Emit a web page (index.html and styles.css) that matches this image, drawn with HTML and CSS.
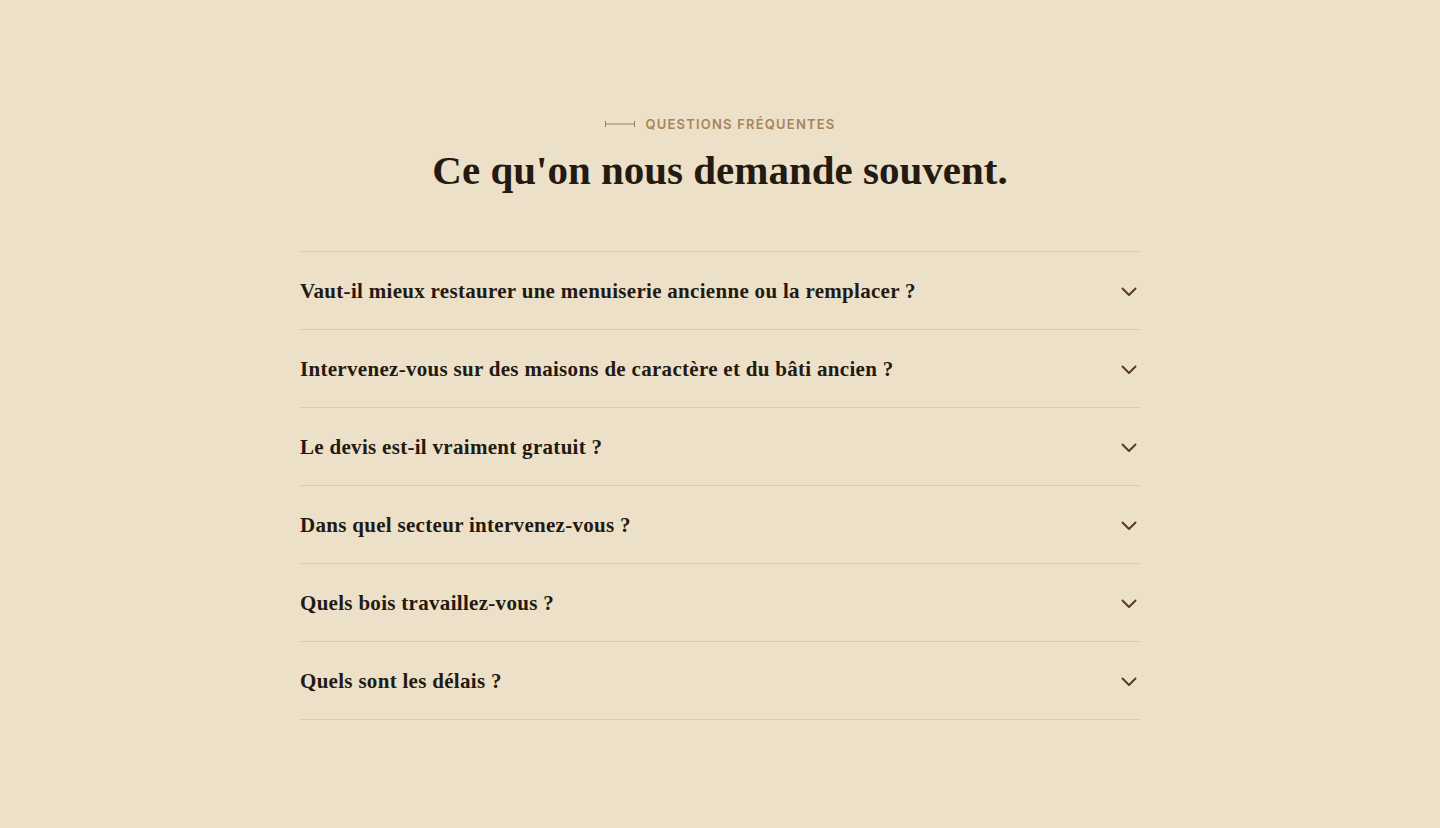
FILE: index.html
```html
<!DOCTYPE html>
<html lang="fr">
<head>
    <meta charset="UTF-8">
    <title>Questions fréquentes</title>
    <link rel="stylesheet" href="styles.css">
</head>
<body>
    <section class="faq">
        <div class="faq-head">
            <p class="eyebrow">
                <svg class="eyebrow-mark" width="30" height="8" viewBox="0 0 30 8"><path d="M0.5 1v6M29.5 1v6M0.5 4h29" stroke="currentColor" stroke-width="1" fill="none"/></svg>
                QUESTIONS FRÉQUENTES
            </p>
            <h2 class="faq-title">Ce qu'on nous demande souvent.</h2>
        </div>

        <ul class="faq-list">
            <li class="faq-item">
                <span class="faq-q">Vaut-il mieux restaurer une menuiserie ancienne ou la remplacer ?</span>
                <svg class="chevron" width="16" height="16" viewBox="0 0 16 16"><path d="M1.5 4.5l6.5 6.5 6.5-6.5" /></svg>
            </li>
            <li class="faq-item">
                <span class="faq-q">Intervenez-vous sur des maisons de caractère et du bâti ancien ?</span>
                <svg class="chevron" width="16" height="16" viewBox="0 0 16 16"><path d="M1.5 4.5l6.5 6.5 6.5-6.5" /></svg>
            </li>
            <li class="faq-item">
                <span class="faq-q">Le devis est-il vraiment gratuit ?</span>
                <svg class="chevron" width="16" height="16" viewBox="0 0 16 16"><path d="M1.5 4.5l6.5 6.5 6.5-6.5" /></svg>
            </li>
            <li class="faq-item">
                <span class="faq-q">Dans quel secteur intervenez-vous ?</span>
                <svg class="chevron" width="16" height="16" viewBox="0 0 16 16"><path d="M1.5 4.5l6.5 6.5 6.5-6.5" /></svg>
            </li>
            <li class="faq-item">
                <span class="faq-q">Quels bois travaillez-vous ?</span>
                <svg class="chevron" width="16" height="16" viewBox="0 0 16 16"><path d="M1.5 4.5l6.5 6.5 6.5-6.5" /></svg>
            </li>
            <li class="faq-item">
                <span class="faq-q">Quels sont les délais ?</span>
                <svg class="chevron" width="16" height="16" viewBox="0 0 16 16"><path d="M1.5 4.5l6.5 6.5 6.5-6.5" /></svg>
            </li>
        </ul>
    </section>
</body>
</html>
```

FILE: styles.css
```css
*{
    padding: 0;
    margin: 0;
    box-sizing: border-box;
}
ul{
    list-style: none;
}
html, body{
    background: #ede0c8;
}
body{
    font-family: "Liberation Serif", serif;
    color: #231a12;
}
.faq{
    width: 840px;
    margin: 0 auto;
    padding: 116px 0 108px;
}
.faq-head{
    text-align: center;
    margin-bottom: 55px;
}
.eyebrow{
    display: flex;
    align-items: center;
    justify-content: center;
    gap: 11px;
    font-family: Inter, "Liberation Sans", sans-serif;
    font-size: 13px;
    font-weight: 600;
    letter-spacing: 1.2px;
    color: #a8845a;
    line-height: 16px;
}
.eyebrow-mark{
    color: #95805a;
}
.faq-title{
    margin-top: 12px;
    font-size: 41px;
    font-weight: 700;
    line-height: 52px;
    color: #231a12;
}
.faq-list{
    border-top: 1px solid #ddcbab;
}
.faq-item{
    display: flex;
    align-items: center;
    justify-content: space-between;
    height: 78px;
    padding-right: 3px;
    padding-top: 2px;
    border-bottom: 1px solid #ddcbab;
    cursor: pointer;
}
.faq-q{
    font-size: 21px;
    font-weight: 700;
    letter-spacing: 0.3px;
}
.chevron{
    fill: none;
    stroke: #5a3a28;
    stroke-width: 2;
    stroke-linecap: round;
    stroke-linejoin: round;
}
```
